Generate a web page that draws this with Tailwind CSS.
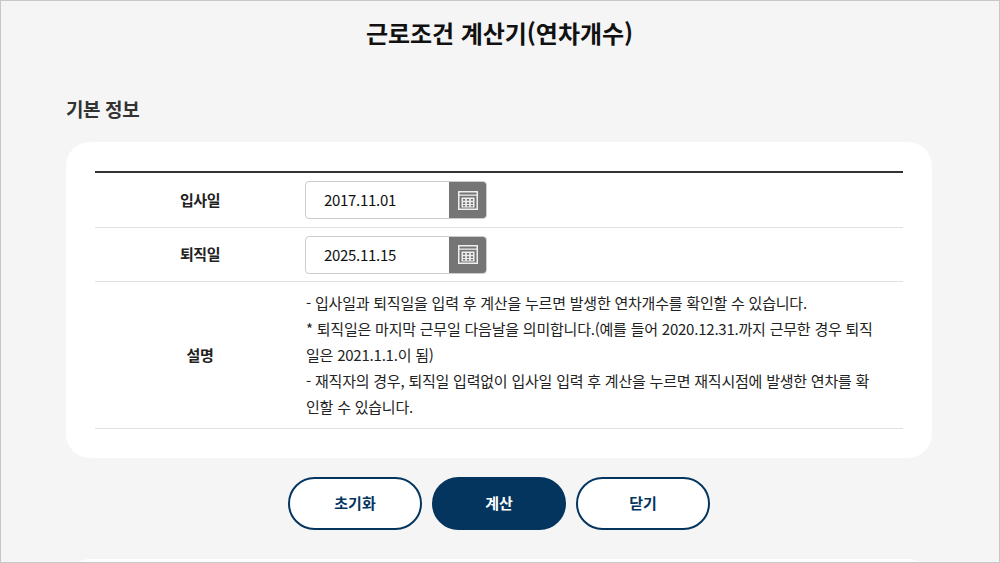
<!DOCTYPE html>
<html lang="ko">
<head>
<meta charset="utf-8">
<script src="https://cdn.jsdelivr.net/npm/@tailwindcss/browser@4"></script>
</head>
<body class="m-0 overflow-hidden">
<div class="w-[1000px] h-[563px] overflow-hidden box-border border-[1px] border-[#c8c8c8] bg-[#f5f5f5] font-['Noto_Sans_CJK_KR','Noto_Sans',sans-serif] text-[#222] flex flex-col">
  <h1 class="shrink-0 h-[65px] pt-[15px] pr-[1px] text-center text-[24px] leading-[34px] font-bold text-[#111] tracking-[-0.05px]">근로조건 계산기(연차개수)</h1>
  <h2 class="shrink-0 mt-[29px] ml-[65px] text-[19px] leading-[28px] font-bold text-[#333] tracking-[-0.4px]">기본 정보</h2>
  <section class="shrink-0 mt-[19px] ml-[65px] w-[866px] h-[316px] rounded-[24px] bg-white px-[29px] pt-[29px]">
    <div class="border-t-2 border-[#333]">
      <div class="flex h-[55px] items-center border-b border-[#e0e0e0]">
        <div class="w-[210px] text-center text-[15px] font-bold text-[#222] tracking-[-0.4px]">입사일</div>
        <div class="flex w-[182px] h-[38px] rounded-[4px] border border-[#ccc] overflow-hidden">
          <div class="flex-1 pl-[18px] text-[15px] leading-[36px] text-[#111] tracking-[-0.3px]">2017.11.01</div>
          <div class="w-[38px] -mr-px bg-[#757575] flex items-center justify-center">
            <svg width="20" height="19" viewBox="0 0 20 19" fill="none"><rect x="0.75" y="0.75" width="18.5" height="17.5" stroke="#efefef" stroke-width="1.5"/><path d="M1 4.2h18" stroke="#efefef" stroke-width="1.2"/><rect x="3.5" y="6.5" width="13" height="10" fill="#efefef"/><path d="M5 8h2.2v1.8H5zM8.9 8h2.2v1.8H8.9zM12.8 8H15v1.8h-2.2zM5 11.2h2.2V13H5zM8.9 11.2h2.2V13H8.9zM12.8 11.2H15V13h-2.2zM5 14h2.2v1.5H5zM8.9 14h2.2v1.5H8.9zM12.8 14H15v1.5h-2.2z" fill="#757575"/></svg>
          </div>
        </div>
      </div>
      <div class="flex h-[54px] items-center border-b border-[#e0e0e0]">
        <div class="w-[210px] text-center text-[15px] font-bold text-[#222] tracking-[-0.4px]">퇴직일</div>
        <div class="flex w-[182px] h-[38px] rounded-[4px] border border-[#ccc] overflow-hidden">
          <div class="flex-1 pl-[18px] text-[15px] leading-[36px] text-[#111] tracking-[-0.3px]">2025.11.15</div>
          <div class="w-[38px] -mr-px bg-[#757575] flex items-center justify-center">
            <svg width="20" height="19" viewBox="0 0 20 19" fill="none"><rect x="0.75" y="0.75" width="18.5" height="17.5" stroke="#efefef" stroke-width="1.5"/><path d="M1 4.2h18" stroke="#efefef" stroke-width="1.2"/><rect x="3.5" y="6.5" width="13" height="10" fill="#efefef"/><path d="M5 8h2.2v1.8H5zM8.9 8h2.2v1.8H8.9zM12.8 8H15v1.8h-2.2zM5 11.2h2.2V13H5zM8.9 11.2h2.2V13H8.9zM12.8 11.2H15V13h-2.2zM5 14h2.2v1.5H5zM8.9 14h2.2v1.5H8.9zM12.8 14H15v1.5h-2.2z" fill="#757575"/></svg>
          </div>
        </div>
      </div>
      <div class="flex h-[147px] items-center border-b border-[#e0e0e0]">
        <div class="w-[210px] shrink-0 text-center text-[15px] font-bold text-[#222] tracking-[-0.4px]">설명</div>
        <div class="w-[570px] pl-px break-all text-[15px] leading-[26px] text-[#222] tracking-[-0.22px]">- 입사일과 퇴직일을 입력 후 계산을 누르면 발생한 연차개수를 확인할 수 있습니다.<br>* 퇴직일은 마지막 근무일 다음날을 의미합니다.(예를 들어 2020.12.31.까지 근무한 경우 퇴직일은 2021.1.1.이 됨)<br>- 재직자의 경우, 퇴직일 입력없이 입사일 입력 후 계산을 누르면 재직시점에 발생한 연차를 확인할 수 있습니다.</div>
      </div>
    </div>
  </section>
  <div class="shrink-0 mt-[19px] pr-[2px] flex justify-center gap-[10px]">
    <button class="w-[134px] h-[53px] rounded-full border-2 border-[#03355f] bg-white text-[15px] font-bold text-[#03355f]">초기화</button>
    <button class="w-[134px] h-[53px] rounded-full border-2 border-[#03355f] bg-[#03355f] text-[15px] font-bold text-white">계산</button>
    <button class="w-[134px] h-[53px] rounded-full border-2 border-[#03355f] bg-white text-[15px] font-bold text-[#03355f]">닫기</button>
  </div>
  <div class="shrink-0 mt-[29px] ml-[65px] w-[866px] h-[24px] rounded-t-[24px] bg-white"></div>
</div>
</body>
</html>
